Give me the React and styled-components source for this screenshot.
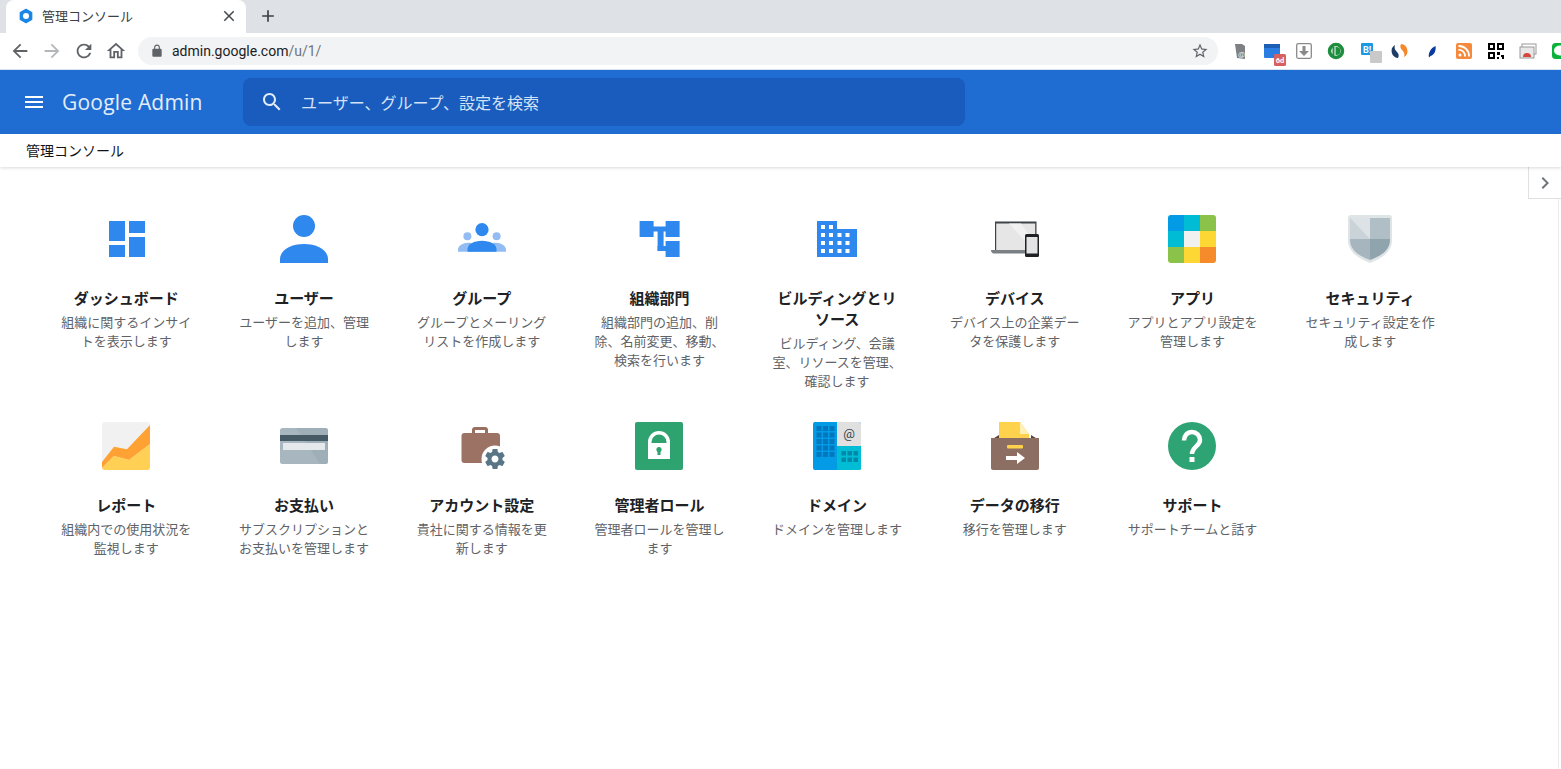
import React from "react";
import styled, { createGlobalStyle } from "styled-components";

const CJK = `Roboto, "Noto Sans CJK JP", "Noto Sans JP", sans-serif`;

const Global = createGlobalStyle`
  html, body { margin: 0; padding: 0; height: 100%; overflow: hidden; background: #fff; }
  body { font-family: ${CJK}; }
  #root { height: 100%; }
`;

const Page = styled.div`
  display: flex;
  flex-direction: column;
  height: 769px;
  width: 1561px;
  overflow: hidden;
`;
const TabStrip = styled.div`
  display: flex;
  align-items: flex-end;
  height: 33px;
  background: #dee1e6;
  padding-left: 6px;
  flex: none;
`;
const Tab = styled.div`
  display: flex;
  align-items: center;
  width: 240px;
  height: 33px;
  box-sizing: border-box;
  background: #fff;
  border-radius: 8px 8px 0 0;
  padding: 0 8px 2px 12px;
  font-size: 13px;
  color: #3c4043;
`;
const TabTitle = styled.span`
  flex: 1;
  margin-left: 8px;
`;
const NewTab = styled.div`
  display: flex;
  align-items: center;
  justify-content: center;
  width: 28px;
  height: 33px;
  box-sizing: border-box;
  padding-bottom: 2px;
  margin-left: 8px;
`;
const Toolbar = styled.div`
  display: flex;
  align-items: center;
  height: 36px;
  background: #fff;
  border-bottom: 1px solid #d7e2f2;
  flex: none;
  padding-left: 4px;
  overflow: hidden;
`;
const NavSlot = styled.div`
  width: 32px;
  height: 32px;
  display: flex;
  align-items: center;
  justify-content: center;
  flex: none;
`;
const Omnibox = styled.div`
  display: flex;
  align-items: center;
  width: 1080px;
  height: 28px;
  margin-left: 6px;
  border-radius: 14px;
  background: #f1f3f4;
  flex: none;
  font-size: 14px;
  padding: 0 9px 0 12px;
  box-sizing: border-box;
`;
const Host = styled.span`
  margin-left: 8px;
  color: #202124;
`;
const UrlPath = styled.span`
  color: #70757a;
  flex: 1;
`;
const Tray = styled.div`
  display: flex;
  margin-left: 6px;
  flex: none;
`;
const ExtSlot = styled.div`
  width: 32px;
  height: 32px;
  display: flex;
  align-items: center;
  justify-content: center;
  flex: none;
`;
const AdminHeader = styled.header`
  display: flex;
  align-items: center;
  height: 64px;
  background: #1f6dd2;
  flex: none;
`;
const MenuSlot = styled.div`
  width: 24px;
  height: 24px;
  margin-left: 22px;
  flex: none;
`;
const Logo = styled.div`
  margin-left: 16px;
  width: 181px;
  flex: none;
  color: #fff;
  font-family: "Open Sans", Roboto, sans-serif;
  font-size: 21px;
  letter-spacing: 0.2px;
  opacity: 0.88;
`;
const SearchBox = styled.div`
  display: flex;
  align-items: center;
  width: 722px;
  height: 48px;
  background: #1a5cbe;
  border-radius: 8px;
  padding-left: 17px;
  box-sizing: border-box;
  color: #d4e2f6;
  font-size: 16px;
  flex: none;
`;
const SearchText = styled.span`
  margin-left: 17px;
`;
const Breadcrumb = styled.div`
  display: flex;
  align-items: center;
  height: 33px;
  box-sizing: border-box;
  padding: 0 0 2px 26px;
  background: #fff;
  font-size: 14px;
  color: #111;
  box-shadow: 0 1px 3px rgba(60, 64, 67, 0.2);
  position: relative;
  z-index: 1;
  flex: none;
`;
const Main = styled.main`
  position: relative;
  flex: 1;
  padding: 48px 0 0 37.5px;
`;
const Grid = styled.div`
  display: grid;
  grid-template-columns: repeat(8, 177.7px);
  row-gap: 30.5px;
`;
const Cell = styled.div`
  display: flex;
  flex-direction: column;
  align-items: center;
  text-align: center;
`;
const IconBox = styled.div`
  width: 48px;
  height: 48px;
  margin-bottom: 26px;
`;
const Title = styled.div`
  width: 130px;
  font-size: 15px;
  line-height: 21px;
  font-weight: 700;
  color: #202124;
  margin-bottom: 3px;
`;
const Desc = styled.div`
  width: 134px;
  font-size: 13px;
  line-height: 19px;
  color: #5f6368;
`;
const SideToggle = styled.div`
  position: absolute;
  top: 0;
  right: 0;
  width: 32px;
  height: 31px;
  background: #fff;
  border-left: 1px solid #e0e0e0;
  border-bottom: 1px solid #e0e0e0;
  display: flex;
  align-items: center;
  justify-content: center;
`;
const SideRail = styled.div`
  position: absolute;
  top: 32px;
  right: 2px;
  bottom: 0;
  width: 1px;
  background: #ececec;
`;

const M = ({ d, size = 24, color = "#5f6368" }) => (
  <svg width={size} height={size} viewBox="0 0 24 24" fill={color} style={{ display: "block" }}>
    <path d={d} />
  </svg>
);
const P = {
  back: "M20 11H7.83l5.59-5.59L12 4l-8 8 8 8 1.41-1.41L7.83 13H20v-2z",
  fwd: "M12 4l-1.41 1.41L16.17 11H4v2h12.17l-5.58 5.59L12 20l8-8z",
  reload: "M17.65 6.35C16.2 4.9 14.21 4 12 4c-4.42 0-7.99 3.58-7.99 8s3.57 8 7.99 8c3.73 0 6.84-2.55 7.73-6h-2.08c-.82 2.33-3.04 4-5.65 4-3.31 0-6-2.69-6-6s2.69-6 6-6c1.66 0 3.14.69 4.22 1.78L13 11h7V4l-2.35 2.35z",
  home: "M12 5.69l5 4.5V18h-2v-6H9v6H7v-7.81l5-4.5M12 3L2 12h3v8h6v-6h2v6h6v-8h3L12 3z",
  lock: "M18 8h-1V6c0-2.76-2.24-5-5-5S7 3.24 7 6v2H6c-1.1 0-2 .9-2 2v10c0 1.1.9 2 2 2h12c1.1 0 2-.9 2-2V10c0-1.1-.9-2-2-2zM9 6c0-1.66 1.34-3 3-3s3 1.34 3 3v2H9V6z",
  star: "M22 9.24l-7.19-.62L12 2 9.19 8.63 2 9.24l5.46 4.73L5.82 21 12 17.27 18.18 21l-1.63-7.03L22 9.24zM12 15.4l-3.76 2.27 1-4.28-3.32-2.88 4.38-.38L12 6.1l1.71 4.04 4.38.38-3.32 2.88 1 4.28L12 15.4z",
  search: "M15.5 14h-.79l-.28-.27C15.41 12.59 16 11.11 16 9.5 16 5.91 13.09 3 9.5 3S3 5.91 3 9.5 5.91 16 9.5 16c1.61 0 3.09-.59 4.23-1.57l.27.28v.79l5 4.99L20.49 19l-4.99-5zm-6 0C7.01 14 5 11.99 5 9.5S7.01 5 9.5 5 14 7.01 14 9.5 11.99 14 9.5 14z",
  menu: "M3 18h18v-2H3v2zm0-5h18v-2H3v2zm0-7v2h18V6H3z",
  close: "M19 6.41L17.59 5 12 10.59 6.41 5 5 6.41 10.59 12 5 17.59 6.41 19 12 13.41 17.59 19 19 17.59 13.41 12z",
  add: "M19 13h-6v6h-2v-6H5v-2h6V5h2v6h6v2z",
  chevron: "M10 6L8.59 7.41 13.17 12l-4.58 4.59L10 18l6-6z",
};

const Svg48 = ({ children }) => (
  <svg width="48" height="48" viewBox="0 0 48 48" style={{ display: "block", overflow: "visible" }}>{children}</svg>
);
const BLUE = "#2e88ee";

const Dashboard = () => (
  <Svg48><g fill={BLUE}>
    <rect x="7" y="6" width="16" height="20" /><rect x="27" y="6" width="16" height="12" />
    <rect x="7" y="30" width="16" height="12" /><rect x="27" y="22" width="16" height="20" />
  </g></Svg48>
);
const Users = () => (
  <Svg48><g fill={BLUE}>
    <circle cx="24" cy="11" r="11" />
    <path d="M0 48v-4c0-9 11-15 24-15s24 6 24 15v4z" />
  </g></Svg48>
);
const Groups = () => (
  <Svg48>
    <g fill="#93bcf3">
      <circle cx="9.4" cy="21.3" r="4" /><circle cx="38.6" cy="21.3" r="4" />
      <path d="M0 36.7v-2c0-3.800 5-7 10-7s8 1.500 14 1.500 9-1.500 14-1.500 10 3.200 10 7v2z" />
    </g>
    <g fill={BLUE}>
      <circle cx="24" cy="14.7" r="6.600" />
      <path d="M9.500 36.700v-2.500c0-5 6.500-8.500 14.500-8.500s14.500 3.500 14.500 8.500v2.500z" />
    </g>
  </Svg48>
);
const OrgUnits = () => (
  <Svg48><g fill={BLUE}>
    <rect x="4.600" y="6" width="14" height="16" /><rect x="30.600" y="6" width="14" height="16" />
    <rect x="30.600" y="26" width="14" height="16" />
    <rect x="18" y="11.500" width="13" height="5" /><rect x="22.600" y="13" width="6" height="23" />
    <rect x="22.600" y="31" width="9" height="5" />
  </g></Svg48>
);
const Building = () => {
  const wins = [];
  [4, 12].forEach((x) => [10, 18, 26, 34].forEach((y) => wins.push([x, y])));
  [20.500, 28.500].forEach((x) => [18, 26, 34].forEach((y) => wins.push([x, y])));
  return (
    <svg width="48" height="48" viewBox="0 0 48 48" style={{ display: "block" }}>
      <g transform="translate(4 0)">
        <path d="M0 6h20v8h20v28H0z" fill={BLUE} />
        {wins.map(([x, y]) => <rect key={`${x}-${y}`} x={x} y={y} width="4" height="4" fill="#fff" />)}
      </g>
    </svg>
  );
};
const Devices = () => (
  <Svg48>
    <path d="M4 6.500h41.500V35H4z" fill="#3c4449" />
    <path d="M5.200 8.500h39V35h-39z" fill="#e6e6e6" />
    <path d="M18 8.500h12l14.200 20V35H42z" fill="#f1f1f1" />
    <path d="M0 35h35v3.500H3c-2 0-3-1.500-3-3.500z" fill="#7b8084" />
    <rect x="34" y="19" width="14" height="23" rx="1.500" fill="#202124" />
    <rect x="35.500" y="22" width="11" height="16.500" fill="#e3e3e3" />
  </Svg48>
);
const Apps = () => {
  const colors = ["#039be5", "#00bcd4", "#8bc34a", "#00bcd4", "#f1f1f1", "#fdd835", "#8bc34a", "#fdd835", "#f68b2c"];
  return (
    <Svg48>
      <defs><clipPath id="appsClip"><rect width="48" height="48" rx="3" /></clipPath></defs>
      <g clipPath="url(#appsClip)">
        {colors.map((c, i) => <rect key={i} x={(i % 3) * 16} y={Math.floor(i / 3) * 16} width="16.300" height="16.300" fill={c} />)}
      </g>
    </Svg48>
  );
};
const Shield = () => (
  <Svg48>
    <path d="M1 3a3 3 0 0 1 3-3h38a3 3 0 0 1 3 3v22c0 11-9 18-22 23C10 43 1 36 1 25z" transform="translate(1 0)" fill="#dfe4e6" />
    <path d="M4 3h20v21H4z" fill="#c9d3d8" />
    <path d="M24 3h20v21H24z" fill="#b0bec5" />
    <path d="M4 24h20v21C13 41 4 35 4 25z" fill="#a7b6be" />
    <path d="M24 24h20v1c0 10-9 16-20 20z" fill="#90a4ae" />
    <path d="M4 3h20v21z" fill="#dce2e5" />
  </Svg48>
);
const Report = () => (
  <Svg48>
    <rect width="48" height="48" rx="3" fill="#f1f1f1" />
    <path d="M0 40L12 24.700l13 2.600L48 3v19L27 38l-15-4L0 46z" fill="#ffa233" />
    <path d="M0 46l12-12 15 4 21-16v23a3 3 0 0 1-3 3H3a3 3 0 0 1-3-2z" fill="#ffd054" />
  </Svg48>
);
const Card = () => (
  <Svg48>
    <rect y="6" width="48" height="36" rx="2.500" fill="#a8b7bf" />
    <path d="M16 6h29.500a2.500 2.500 0 0 1 2.500 2.500V39.500a2.500 2.500 0 0 1-2.500 2.500H40z" fill="#99aab3" opacity=".6" />
    <rect y="13" width="48" height="6" fill="#455a64" />
    <rect x="3" y="21" width="42" height="7" fill="#e6e9eb" />
  </Svg48>
);
const Briefcase = () => (
  <Svg48>
    <path d="M14 11V8a3 3 0 0 1 3-3h10a3 3 0 0 1 3 3v3h-3V8H17v3z" fill="#99705f" />
    <rect x="3.500" y="11" width="38.500" height="30" rx="3" fill="#9c7265" />
    <circle cx="37" cy="37" r="13.500" fill="#fff" />
    <g transform="translate(25 25)">
      <path fill="#587686" d="M19.430 12.980c.04-.32.07-.64.07-.98s-.03-.66-.07-.98l2.110-1.650c.19-.15.24-.42.120-.64l-2-3.460c-.12-.22-.39-.3-.61-.22l-2.490 1c-.52-.4-1.080-.73-1.690-.98l-.38-2.650C14.460 2.180 14.250 2 14 2h-4c-.25 0-.46.18-.49.420l-.38 2.650c-.61.25-1.170.59-1.690.98l-2.490-1c-.23-.09-.49 0-.61.22l-2 3.460c-.13.220-.07.490.12.640l2.110 1.650c-.04.320-.07.650-.07.980s.03.660.07.980l-2.110 1.650c-.19.150-.24.420-.12.640l2 3.460c.12.220.39.300.61.220l2.490-1c.52.400 1.080.730 1.690.980l.38 2.650c.03.240.24.420.49.420h4c.25 0 .46-.18.49-.42l.38-2.650c.61-.25 1.170-.59 1.690-.98l2.490 1c.23.090.49 0 .61-.22l2-3.460c.12-.22.07-.49-.12-.64l-2.110-1.650zM12 15.500c-1.930 0-3.500-1.570-3.500-3.500s1.570-3.500 3.500-3.500 3.500 1.570 3.500 3.500-1.570 3.500-3.500 3.500z" />
    </g>
  </Svg48>
);
const AdminRole = () => (
  <Svg48>
    <rect width="48" height="48" rx="2" fill="#2ea36f" />
    <path d="M13 37V20a11 11 0 0 1 22 0v17z" fill="#fff" />
    <path d="M16.500 21v-1a7.500 7.500 0 0 1 15 0v1z" fill="#2ea36f" />
    <circle cx="24" cy="27.500" r="2.600" fill="#2ea36f" />
    <rect x="22.500" y="28" width="3" height="5" fill="#2ea36f" />
  </Svg48>
);
const DomainIcon = () => {
  const left = [];
  for (let r = 0; r < 5; r++) for (let c = 0; c < 3; c++) left.push([3.500 + c * 6.500, 4 + r * 6.500]);
  const right = [];
  for (let r = 0; r < 2; r++) for (let c = 0; c < 3; c++) right.push([28.500 + c * 6, 29 + r * 6.500]);
  return (
    <Svg48>
      <rect width="48" height="48" rx="2" fill="#039be5" />
      <path d="M24 0h22a2 2 0 0 1 2 2v22H24z" fill="#e0e0e0" />
      <path d="M24 24h24v22a2 2 0 0 1-2 2H24z" fill="#00bcd4" />
      {left.map(([x, y]) => <rect key={`l${x}${y}`} x={x} y={y} width="5" height="5" fill="#0277bd" />)}
      {right.map(([x, y]) => <rect key={`r${x}${y}`} x={x} y={y} width="4.500" height="4.500" fill="#0288a8" />)}
      <text x="36" y="16" textAnchor="middle" fontSize="13" fontFamily="Roboto, sans-serif" fill="#37474f">@</text>
    </Svg48>
  );
};
const Migration = () => (
  <Svg48>
    <path d="M8 0h21l9 12v12H8z" fill="#ffd24d" />
    <path d="M29 0l9 12h-9z" fill="#fff0b3" />
    <path d="M0 18l8-5v5zM48 18l-8-5v5z" fill="#5d4037" />
    <path d="M0 16h48v30a2 2 0 0 1-2 2H2a2 2 0 0 1-2-2z" fill="#8d6e63" />
    <rect x="16" y="23" width="16" height="3.500" rx="1" fill="#ffd24d" />
    <path d="M15 34h11v-4l8 6-8 6v-4H15z" fill="#fff" />
  </Svg48>
);
const Support = () => (
  <Svg48>
    <circle cx="24" cy="24" r="24" fill="#2ea374" />
    <path d="M16 18.500c0-5 3.500-8.500 8-8.500s8 3.500 8 8c0 6-8 7-8 14" fill="none" stroke="#fff" strokeWidth="4.500" />
    <rect x="21.500" y="35" width="5" height="5" fill="#fff" />
  </Svg48>
);

const items = [
  ["ダッシュボード", "組織に関するインサイトを表示します", Dashboard],
  ["ユーザー", "ユーザーを追加、管理します", Users],
  ["グループ", "グループとメーリングリストを作成します", Groups],
  ["組織部門", "組織部門の追加、削除、名前変更、移動、検索を行います", OrgUnits],
  ["ビルディングとリソース", "ビルディング、会議室、リソースを管理、確認します", Building],
  ["デバイス", "デバイス上の企業データを保護します", Devices],
  ["アプリ", "アプリとアプリ設定を管理します", Apps],
  ["セキュリティ", "セキュリティ設定を作成します", Shield],
  ["レポート", "組織内での使用状況を監視します", Report],
  ["お支払い", "サブスクリプションとお支払いを管理します", Card],
  ["アカウント設定", "貴社に関する情報を更新します", Briefcase],
  ["管理者ロール", "管理者ロールを管理します", AdminRole],
  ["ドメイン", "ドメインを管理します", DomainIcon],
  ["データの移行", "移行を管理します", Migration],
  ["サポート", "サポートチームと話す", Support],
];

const Ext = ({ children }) => (
  <svg width="32" height="32" viewBox="0 0 32 32" style={{ display: "block", overflow: "visible" }}>{children}</svg>
);
const extensions = [
  <Ext key="a"><path d="M11 9h7l3 2v13l-8-1z" fill="#7d8183" /><text x="17.500" y="22" fontSize="8" textAnchor="middle" fontFamily="Roboto, sans-serif" fill="#e8e8e8">@</text></Ext>,
  <Ext key="b"><rect x="8" y="9" width="16" height="14" rx="1" fill="#2b7de1" /><rect x="8" y="9" width="16" height="4" fill="#1d5fb5" /><rect x="18" y="19" width="12" height="12" rx="1.500" fill="#d8615f" /><text x="24" y="28" fontSize="7.500" fontWeight="700" textAnchor="middle" fontFamily="Roboto, sans-serif" fill="#fff">6d</text></Ext>,
  <Ext key="c"><rect x="8.700" y="8.700" width="14.600" height="14.600" rx="1.500" fill="#fff" stroke="#8a8a8a" strokeWidth="1.300" /><path d="M14.500 11h3v5h3.500L16 21l-5-5h3.500z" fill="#8a8a8a" /></Ext>,
  <Ext key="d"><circle cx="16" cy="16" r="6.500" fill="none" stroke="#1e8e3e" strokeWidth="3.500" /><rect x="12.500" y="12" width="2" height="8" fill="#1e8e3e" /><path d="M15.500 12h1a4 4 0 0 1 0 8h-1z" fill="#1e8e3e" /></Ext>,
  <Ext key="e"><rect x="9" y="8" width="12" height="12" rx="1" fill="#1b9ae4" /><text x="15" y="17.500" fontSize="9" fontWeight="700" textAnchor="middle" fontFamily="Roboto, sans-serif" fill="#fff">B!</text><rect x="18" y="16" width="12" height="12" rx="1" fill="#c9c9c9" /></Ext>,
  <Ext key="f"><path d="M17 9a7 7 0 0 1 3 13c1-3 0-5-2-7s-2-4-1-6z" fill="#f5882a" /><path d="M14 23a7 7 0 0 1-3-13c-1 3 0 5 2 7s2 4 1 6z" fill="#1f3c66" /></Ext>,
  <Ext key="g"><path d="M19.500 11c.8 4-1 9-5 10l-1.500 1.500c-1-4 1.500-9.500 6.500-11.500z" fill="#0a3aa0" /></Ext>,
  <Ext key="h"><rect x="8" y="8" width="16" height="16" rx="2" fill="#f58a3c" /><circle cx="12" cy="20" r="1.500" fill="#fff" /><path d="M10.500 15a6 6 0 0 1 6.500 6.500M10.500 11a10 10 0 0 1 10.500 10.500" fill="none" stroke="#fff" strokeWidth="1.800" /></Ext>,
  <Ext key="i"><g fill="none" stroke="#000" strokeWidth="2"><rect x="9" y="9" width="5" height="5" /><rect x="18" y="9" width="5" height="5" /><rect x="9" y="18" width="5" height="5" /></g><path d="M17 17h3v3h-3zM21 20h3v4h-2v-2h-1zM17 22h2v2h-2z" fill="#000" /></Ext>,
  <Ext key="j"><rect x="10" y="9" width="14" height="10" fill="#fff" stroke="#9a9a9a" /><rect x="8" y="12" width="14" height="11" fill="#e8e8e8" stroke="#9a9a9a" /><path d="M11 22a4 4 0 0 1 8 0z" fill="#d8453b" /></Ext>,
  <Ext key="k"><rect x="8" y="8" width="16" height="16" rx="3.500" fill="#0bb13a" /><ellipse cx="16" cy="15.500" rx="6" ry="5" fill="#fff" /></Ext>,
];

export default function App() {
  return (
    <>
      <Global />
      <Page>
        <TabStrip>
          <Tab>
            <svg width="16" height="16" viewBox="0 0 16 16" style={{ flex: "none" }}>
              <path d="M8 1.500l5.600 3.250v6.500L8 14.500l-5.600-3.250v-6.500z" fill="#1a86e8" stroke="#1a86e8" strokeWidth="1.500" strokeLinejoin="round" />
              <circle cx="8" cy="8" r="3" fill="#fff" />
            </svg>
            <TabTitle>管理コンソール</TabTitle>
            <M d={P.close} size={18} color="#45494d" />
          </Tab>
          <NewTab><M d={P.add} size={20} color="#3c4043" /></NewTab>
        </TabStrip>
        <Toolbar>
          <NavSlot><M d={P.back} size={22} /></NavSlot>
          <NavSlot><M d={P.fwd} size={22} color="#b4b7ba" /></NavSlot>
          <NavSlot><M d={P.reload} size={22} /></NavSlot>
          <NavSlot><M d={P.home} size={22} /></NavSlot>
          <Omnibox>
            <M d={P.lock} size={14} />
            <Host>admin.google.com</Host>
            <UrlPath>/u/1/</UrlPath>
            <M d={P.star} size={18} />
          </Omnibox>
          <Tray>
            {extensions.map((e, i) => <ExtSlot key={i}>{e}</ExtSlot>)}
          </Tray>
        </Toolbar>
        <AdminHeader>
          <MenuSlot><M d={P.menu} color="#fff" /></MenuSlot>
          <Logo>Google Admin</Logo>
          <SearchBox>
            <M d={P.search} color="#e3edfa" />
            <SearchText>ユーザー、グループ、設定を検索</SearchText>
          </SearchBox>
        </AdminHeader>
        <Breadcrumb>管理コンソール</Breadcrumb>
        <Main>
          <Grid>
            {items.map(([title, desc, Icon]) => (
              <Cell key={title}>
                <IconBox><Icon /></IconBox>
                <Title>{title}</Title>
                <Desc>{desc}</Desc>
              </Cell>
            ))}
          </Grid>
          <SideRail />
          <SideToggle><M d={P.chevron} size={24} color="#70757a" /></SideToggle>
        </Main>
      </Page>
    </>
  );
}
